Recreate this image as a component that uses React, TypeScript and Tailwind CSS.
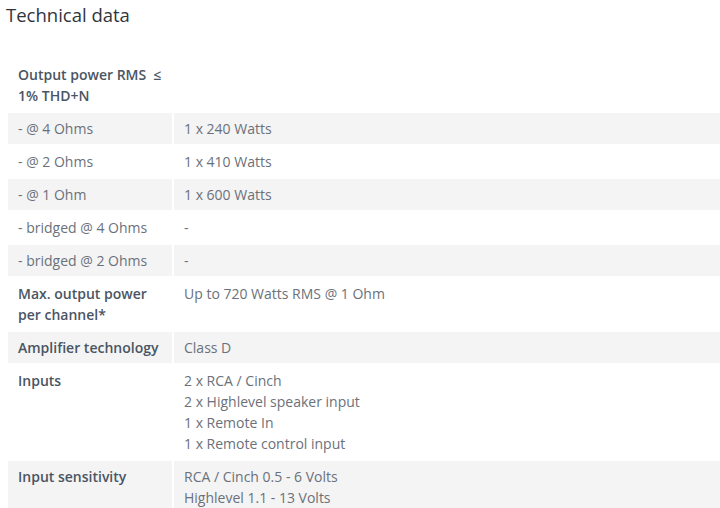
import React from "react";

const rows: { label: React.ReactNode; value: React.ReactNode; bold?: boolean; gray: boolean }[] = [
  { label: <>Output power RMS&nbsp; ≤<br />1% THD+N</>, value: "", bold: true, gray: false },
  { label: "- @ 4 Ohms", value: "1 x 240 Watts", gray: true },
  { label: "- @ 2 Ohms", value: "1 x 410 Watts", gray: false },
  { label: "- @ 1 Ohm", value: "1 x 600 Watts", gray: true },
  { label: "- bridged @ 4 Ohms", value: "-", gray: false },
  { label: "- bridged @ 2 Ohms", value: "-", gray: true },
  { label: <>Max. output power<br />per channel*</>, value: "Up to 720 Watts RMS @ 1 Ohm", bold: true, gray: false },
  { label: "Amplifier technology", value: "Class D", bold: true, gray: true },
  {
    label: "Inputs",
    value: (
      <>
        2 x RCA / Cinch<br />2 x Highlevel speaker input<br />1 x Remote In<br />1 x Remote control input
      </>
    ),
    bold: true,
    gray: false,
  },
  {
    label: "Input sensitivity",
    value: (
      <>
        RCA / Cinch 0.5 - 6 Volts<br />Highlevel 1.1 - 13 Volts
      </>
    ),
    bold: true,
    gray: true,
  },
];

export default function App() {
  return (
    <div
      className="w-[720px] h-[508px] overflow-hidden bg-white"
      style={{ fontFamily: '"Open Sans", "Liberation Sans", sans-serif' }}
    >
      <h2 className="pl-[6px] pt-[1px] text-[18.5px] leading-[27px] text-[#30353c] font-normal">Technical data</h2>
      <div className="mt-[31px] ml-[8px] w-[712px] grid grid-cols-[164px_1fr] gap-[2px] text-[14px] leading-[21px]">
        {rows.map((r, i) => (
          <React.Fragment key={i}>
            <div
              className={`px-[10px] py-[5px] ${r.gray ? "bg-[#f4f4f4]" : "bg-white"} ${
                r.bold ? "font-semibold text-[#4a5563]" : "text-[#6b717a]"
              }`}
            >
              {r.label}
            </div>
            <div className={`px-[10px] py-[5px] text-[#6b717a] ${r.gray ? "bg-[#f4f4f4]" : "bg-white"}`}>
              {r.value}
            </div>
          </React.Fragment>
        ))}
      </div>
    </div>
  );
}
